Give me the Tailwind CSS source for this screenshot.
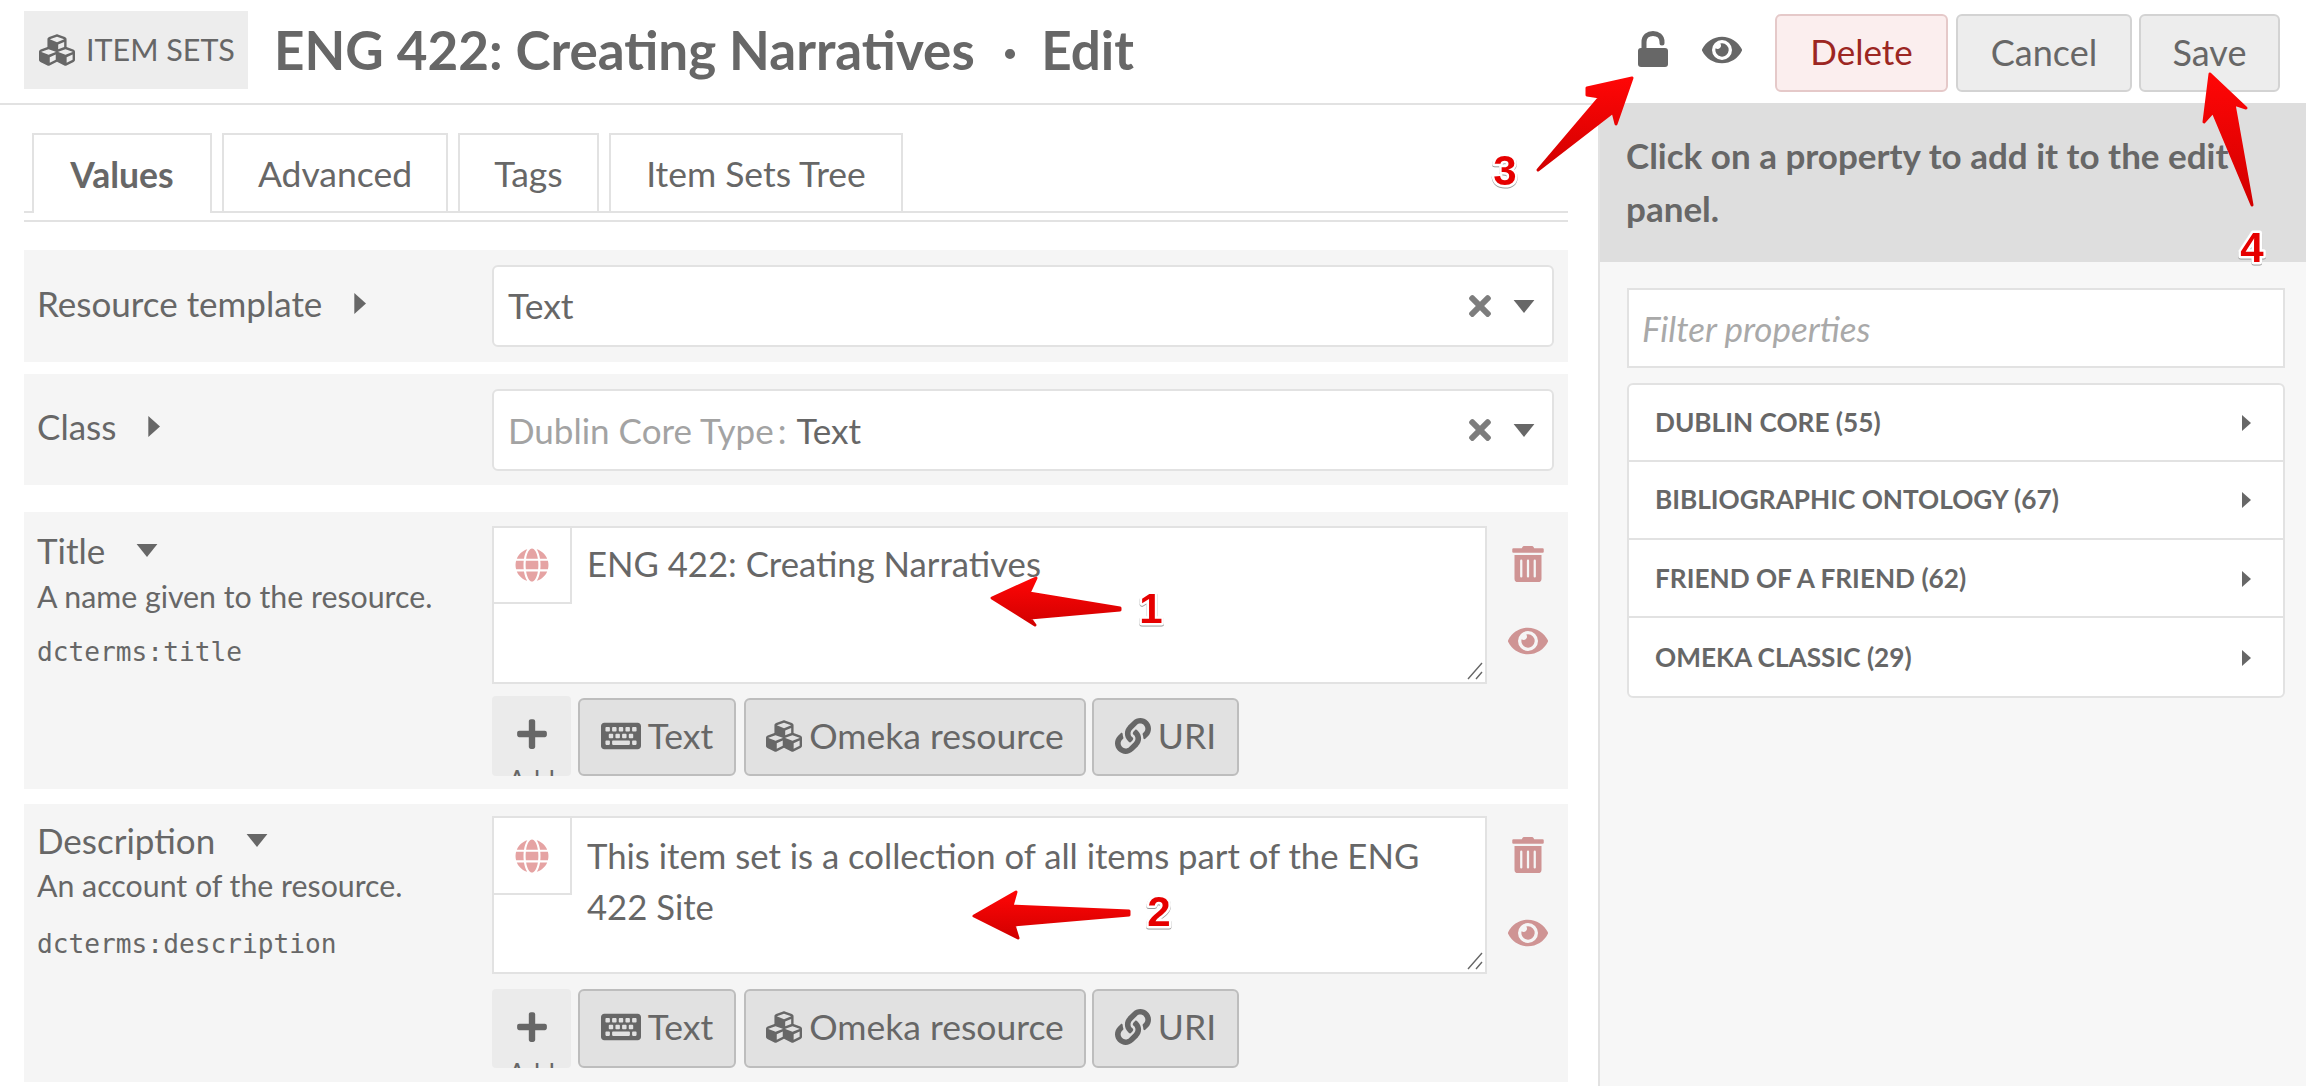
<!DOCTYPE html>
<html lang="en">
<head>
    <meta charset="UTF-8">
    <title>ENG 422: Creating Narratives · Edit</title>
    <script src="https://cdn.jsdelivr.net/npm/@tailwindcss/browser@4"></script>
</head>
<body>
    <!-- icon sprites -->
    <svg class="hidden" xmlns="http://www.w3.org/2000/svg">
        <symbol id="i-cubes" viewBox="0 0 512 512"><path d="M488.6 250.2L392 214V105.5c0-15-9.3-28.4-23.4-33.7l-100-37.5c-8.1-3.1-17.1-3.1-25.3 0l-100 37.5c-14.1 5.3-23.4 18.7-23.4 33.7V214l-96.6 36.2C9.3 255.5 0 268.9 0 283.9V394c0 13.6 7.7 26.1 19.9 32.2l100 50c10.1 5.1 22.1 5.1 32.2 0l103.9-52 103.9 52c10.1 5.1 22.1 5.1 32.2 0l100-50c12.2-6.1 19.9-18.6 19.9-32.2V283.9c0-15-9.3-28.4-23.4-33.7zM358 214.8l-85 31.9v-68.2l85-37v73.3zM154 104.1l102-38.2 102 38.2v.6l-102 41.4-102-41.4v-.6zm84 291.1l-85 42.5v-79.1l85-38.8v75.4zm0-112l-102 41.4-102-41.4v-.6l102-38.2 102 38.2v.6zm240 112l-85 42.5v-79.1l85-38.8v75.4zm0-112l-102 41.4-102-41.4v-.6l102-38.2 102 38.2v.6z"/></symbol>
        <symbol id="i-eye" viewBox="0 0 576 512"><path d="M572.52 241.4C518.29 135.59 410.93 64 288 64S57.68 135.64 3.48 241.41a32.35 32.35 0 0 0 0 29.19C57.71 376.41 165.07 448 288 448s230.32-71.64 284.52-177.41a32.35 32.35 0 0 0 0-29.19zM288 400a144 144 0 1 1 144-144 143.93 143.93 0 0 1-144 144zm0-240a95.31 95.31 0 0 0-25.31 3.79 47.85 47.85 0 0 1-66.9 66.9A95.78 95.78 0 1 0 288 160z"/></symbol>
        <symbol id="i-trash" viewBox="0 0 448 512"><path d="M32 464a48 48 0 0 0 48 48h288a48 48 0 0 0 48-48V128H32zm272-256a16 16 0 0 1 32 0v224a16 16 0 0 1-32 0zm-96 0a16 16 0 0 1 32 0v224a16 16 0 0 1-32 0zm-96 0a16 16 0 0 1 32 0v224a16 16 0 0 1-32 0zM432 32H312l-9.4-18.7A24 24 0 0 0 281.1 0H166.8a23.72 23.72 0 0 0-21.4 13.3L136 32H16A16 16 0 0 0 0 48v32a16 16 0 0 0 16 16h416a16 16 0 0 0 16-16V48a16 16 0 0 0-16-16z"/></symbol>
        <symbol id="i-globe" viewBox="0 0 496 512"><path d="M336.5 160C322 70.7 287.8 8 248 8s-74 62.7-88.5 152h177zM152 256c0 22.2 1.2 43.5 3.3 64h185.3c2.1-20.5 3.3-41.8 3.3-64s-1.2-43.5-3.3-64H155.3c-2.1 20.5-3.3 41.8-3.3 64zm324.7-96c-28.6-67.9-86.5-120.4-158-141.6 24.4 33.8 41.2 84.7 50 141.6h108zM177.2 18.4C105.8 39.6 47.8 92.1 19.3 160h108c8.7-56.9 25.5-107.8 49.9-141.6zM487.4 192H372.7c2.1 21 3.3 42.5 3.3 64s-1.2 43-3.3 64h114.6c5.5-20.5 8.6-41.8 8.6-64s-3.1-43.5-8.5-64zM120 256c0-21.5 1.2-43 3.3-64H8.6C3.2 212.5 0 233.8 0 256s3.2 43.5 8.6 64h114.6c-2-21-3.2-42.5-3.2-64zm39.5 96c14.5 89.3 48.7 152 88.5 152s74-62.7 88.5-152h-177zm159.3 141.6c71.4-21.2 129.4-73.7 158-141.6h-108c-8.8 56.9-25.6 107.8-50 141.6zM19.3 352c28.6 67.9 86.5 120.4 158 141.6-24.4-33.8-41.2-84.7-50-141.6h-108z"/></symbol>
        <symbol id="i-keyboard" viewBox="0 0 576 512"><path d="M528 448H48c-26.51 0-48-21.49-48-48V112c0-26.51 21.49-48 48-48h480c26.51 0 48 21.49 48 48v288c0 26.51-21.49 48-48 48zM128 180v-40c0-6.627-5.373-12-12-12H76c-6.627 0-12 5.373-12 12v40c0 6.627 5.373 12 12 12h40c6.627 0 12-5.373 12-12zm96 0v-40c0-6.627-5.373-12-12-12h-40c-6.627 0-12 5.373-12 12v40c0 6.627 5.373 12 12 12h40c6.627 0 12-5.373 12-12zm96 0v-40c0-6.627-5.373-12-12-12h-40c-6.627 0-12 5.373-12 12v40c0 6.627 5.373 12 12 12h40c6.627 0 12-5.373 12-12zm96 0v-40c0-6.627-5.373-12-12-12h-40c-6.627 0-12 5.373-12 12v40c0 6.627 5.373 12 12 12h40c6.627 0 12-5.373 12-12zm96 0v-40c0-6.627-5.373-12-12-12h-40c-6.627 0-12 5.373-12 12v40c0 6.627 5.373 12 12 12h40c6.627 0 12-5.373 12-12zm-336 96v-40c0-6.627-5.373-12-12-12h-40c-6.627 0-12 5.373-12 12v40c0 6.627 5.373 12 12 12h40c6.627 0 12-5.373 12-12zm96 0v-40c0-6.627-5.373-12-12-12h-40c-6.627 0-12 5.373-12 12v40c0 6.627 5.373 12 12 12h40c6.627 0 12-5.373 12-12zm96 0v-40c0-6.627-5.373-12-12-12h-40c-6.627 0-12 5.373-12 12v40c0 6.627 5.373 12 12 12h40c6.627 0 12-5.373 12-12zm96 0v-40c0-6.627-5.373-12-12-12h-40c-6.627 0-12 5.373-12 12v40c0 6.627 5.373 12 12 12h40c6.627 0 12-5.373 12-12zm-336 96v-40c0-6.627-5.373-12-12-12H76c-6.627 0-12 5.373-12 12v40c0 6.627 5.373 12 12 12h40c6.627 0 12-5.373 12-12zm288 0v-40c0-6.627-5.373-12-12-12H172c-6.627 0-12 5.373-12 12v40c0 6.627 5.373 12 12 12h232c6.627 0 12-5.373 12-12zm96 0v-40c0-6.627-5.373-12-12-12h-40c-6.627 0-12 5.373-12 12v40c0 6.627 5.373 12 12 12h40c6.627 0 12-5.373 12-12z"/></symbol>
        <symbol id="i-link" viewBox="0 0 512 512"><path d="M326.612 185.391c59.747 59.809 58.927 155.698.36 214.59-.11.12-.24.25-.36.37l-67.2 67.2c-59.27 59.27-155.699 59.262-214.96 0-59.27-59.26-59.27-155.7 0-214.96l37.106-37.106c9.84-9.84 26.786-3.3 27.294 10.606.648 17.722 3.826 35.527 9.69 52.721 1.986 5.822.567 12.262-3.783 16.612l-13.087 13.087c-28.026 28.026-28.905 73.66-1.155 101.96 28.024 28.579 74.086 28.749 102.325.51l67.2-67.19c28.191-28.191 28.073-73.757 0-101.83-3.701-3.694-7.429-6.564-10.341-8.569a16.037 16.037 0 0 1-6.947-12.606c-.396-10.567 3.348-21.456 11.698-29.806l21.054-21.055c5.521-5.521 14.182-6.199 20.584-1.731a152.482 152.482 0 0 1 20.522 17.197zM467.547 44.449c-59.261-59.262-155.69-59.27-214.96 0l-67.2 67.2c-.12.12-.25.25-.36.37-58.566 58.892-59.387 154.781.36 214.59a152.454 152.454 0 0 0 20.521 17.196c6.402 4.468 15.064 3.789 20.584-1.731l21.054-21.055c8.35-8.35 12.094-19.239 11.698-29.806a16.037 16.037 0 0 0-6.947-12.606c-2.912-2.005-6.64-4.875-10.341-8.569-28.073-28.073-28.191-73.639 0-101.83l67.2-67.19c28.239-28.239 74.3-28.069 102.325.51 27.75 28.3 26.872 73.934-1.155 101.96l-13.087 13.087c-4.35 4.35-5.769 10.79-3.783 16.612 5.864 17.194 9.042 34.999 9.69 52.721.509 13.906 17.454 20.446 27.294 10.606l37.106-37.106c59.271-59.259 59.271-155.699.001-214.959z"/></symbol>
        <symbol id="i-plus" viewBox="0 0 448 512"><path d="M416 208H272V64c0-17.67-14.33-32-32-32h-32c-17.67 0-32 14.33-32 32v144H32c-17.67 0-32 14.33-32 32v32c0 17.67 14.33 32 32 32h144v144c0 17.67 14.33 32 32 32h32c17.67 0 32-14.33 32-32V304h144c17.67 0 32-14.33 32-32v-32c0-17.67-14.33-32-32-32z"/></symbol>
        <symbol id="i-times" viewBox="0 0 352 512"><path d="M242.72 256l100.07-100.07c12.28-12.28 12.28-32.19 0-44.48l-22.24-22.24c-12.28-12.28-32.19-12.28-44.48 0L176 189.28 75.93 89.21c-12.28-12.28-32.19-12.28-44.48 0L9.21 111.45c-12.28 12.28-12.28 32.19 0 44.48L109.28 256 9.21 356.07c-12.28 12.28-12.28 32.19 0 44.48l22.24 22.24c12.28 12.28 32.2 12.28 44.48 0L176 322.72l100.07 100.07c12.28 12.28 32.2 12.28 44.48 0l22.24-22.24c12.28-12.28 12.28-32.19 0-44.48L242.72 256z"/></symbol>
        <symbol id="i-right" viewBox="0 0 10 16"><polygon points="1,0 10,8 1,16"/></symbol>
        <symbol id="i-down" viewBox="0 0 16 10"><polygon points="0,0 16,0 8,10"/></symbol>
    </svg>

    <div class="relative w-[2306px] h-[1086px] overflow-hidden bg-white text-[#676767] font-['Lato',sans-serif]">
        <!-- top bar -->
        <header class="flex items-center h-[105px] border-b-2 border-[#e2e2e2] pl-[24px] pr-[26px] pb-[3px]">
            <div class="flex items-center gap-[11px] h-[78px] w-[224px] pl-[15px] bg-[#ededed] text-[30.5px] whitespace-nowrap">
                <svg class="w-[36px] h-[36px] fill-current"><use href="#i-cubes"/></svg>
                <span>ITEM SETS</span>
            </div>
            <h1 class="ml-[26px] text-[53px] font-bold whitespace-nowrap">ENG 422: Creating Narratives<span class="ml-[28px] mr-[24px]">·</span>Edit</h1>
            <div class="ml-auto flex items-center">
                <svg class="w-[32px] h-[36px] mr-[33px] mb-[2px]" viewBox="0 0 32 36" fill="none">
                    <path d="M7 18V11C7 5.5 11 2.5 16 2.5S25 5.5 25 11V12" stroke="#676767" stroke-width="5" stroke-linecap="round"/>
                    <rect x="1" y="17" width="30" height="19" rx="3" fill="#676767"/>
                </svg>
                <svg class="w-[40px] h-[36px] mr-[33px] fill-current"><use href="#i-eye"/></svg>
                <div class="flex items-center justify-center w-[173px] h-[78px] mt-[5px] mr-[8px] pb-[2px] rounded-[6px] border-2 border-[#e5c9c9] bg-[#fbeeee] text-[#9c2622] text-[35px]">Delete</div>
                <div class="flex items-center justify-center w-[176px] h-[78px] mt-[5px] mr-[7px] pb-[2px] rounded-[6px] border-2 border-[#d3d3d3] bg-[#ededed] text-[36px]">Cancel</div>
                <div class="flex items-center justify-center w-[141px] h-[78px] mt-[5px] pb-[2px] rounded-[6px] border-2 border-[#d3d3d3] bg-[#ededed] text-[36px]">Save</div>
            </div>
        </header>

        <div class="flex h-[981px]">
            <!-- edit form -->
            <main class="w-[1598px] pl-[24px] pr-[30px] pt-[28px]">
                <nav class="flex gap-[10px] pl-[8px] h-[80px] border-b-2 border-[#e2e2e2] text-[35.5px]">
                    <div class="flex items-center justify-center w-[180px] h-[80px] pt-[2px] border-2 border-b-0 border-[#e2e2e2] bg-white font-bold">Values</div>
                    <div class="flex items-center justify-center w-[226px] h-[78px] pt-[2px] border-2 border-b-0 border-[#e2e2e2]">Advanced</div>
                    <div class="flex items-center justify-center w-[141px] h-[78px] pt-[2px] border-2 border-b-0 border-[#e2e2e2]">Tags</div>
                    <div class="flex items-center justify-center w-[294px] h-[78px] pt-[2px] border-2 border-b-0 border-[#e2e2e2]">Item Sets Tree</div>
                </nav>
                <div class="h-[2px] mt-[7px] bg-[#e2e2e2]"></div>

                <section class="flex mt-[28px] h-[112px] bg-[#f5f5f5]">
                    <div class="flex items-center w-[468px] pl-[13px] pb-[5px] text-[35px]">Resource template
                        <svg class="w-[13px] h-[21px] ml-[31px] fill-current"><use href="#i-right"/></svg>
                    </div>
                    <div class="flex items-center w-[1062px] h-[82px] mt-[15px] pl-[14px] pr-[17px] bg-white border-2 border-[#e2e2e2] rounded-[6px] text-[35.5px]">
                        <span>Text</span>
                        <svg class="ml-auto w-[22px] h-[32px] fill-[#7d7d7d]"><use href="#i-times"/></svg>
                        <svg class="ml-[22px] w-[22px] h-[13px] fill-current"><use href="#i-down"/></svg>
                    </div>
                </section>

                <section class="flex mt-[12px] h-[111px] bg-[#f5f5f5]">
                    <div class="flex items-center w-[468px] pl-[13px] pb-[7px] text-[35px]">Class
                        <svg class="w-[13px] h-[21px] ml-[31px] fill-current"><use href="#i-right"/></svg>
                    </div>
                    <div class="flex items-center w-[1062px] h-[82px] mt-[15px] pl-[14px] pr-[17px] bg-white border-2 border-[#e2e2e2] rounded-[6px] text-[35px]">
                        <span class="text-[#a3a3a3]">Dublin Core Type<span class="ml-[4px]">:</span></span><span class="ml-[10px]">Text</span>
                        <svg class="ml-auto w-[22px] h-[32px] fill-[#7d7d7d]"><use href="#i-times"/></svg>
                        <svg class="ml-[22px] w-[22px] h-[13px] fill-current"><use href="#i-down"/></svg>
                    </div>
                </section>

                <section class="flex mt-[27px] h-[277px] bg-[#f5f5f5] pt-[14px]">
                    <div class="w-[468px] pl-[13px]">
                        <div class="flex items-center h-[50px] -mt-[1px] text-[35px]">Title
                            <svg class="w-[22px] h-[13px] ml-[31px] fill-current"><use href="#i-down"/></svg>
                        </div>
                        <div class="mt-[1px] text-[30.3px] leading-[40px] whitespace-nowrap">A name given to the resource.</div>
                        <div class="mt-[17px] text-[26.2px] leading-[38px] font-['DejaVu_Sans_Mono',monospace]">dcterms:title</div>
                    </div>
                    <div class="w-[995px]">
                        <div class="relative h-[158px] bg-white border-2 border-[#e2e2e2] pl-[93px] pt-[10px] text-[34.7px] leading-[51px]">
                            <div class="absolute -left-[2px] -top-[2px] flex items-center justify-center w-[80px] h-[78px] border-2 border-[#e2e2e2] bg-white">
                                <svg class="w-[34px] h-[34px] fill-[#e5a3a3]"><use href="#i-globe"/></svg>
                            </div>
                            ENG 422: Creating Narratives
                            <svg class="absolute right-[2px] bottom-[2px] w-[16px] h-[18px]" viewBox="0 0 16 18" stroke="#666" stroke-width="1.4" fill="none"><path d="M1 17L15 1M9 17L15 10"/></svg>
                        </div>
                        <div class="flex mt-[12px] h-[80px]">
                            <div class="flex flex-col items-center w-[79px] h-[80px] overflow-hidden bg-[#ebebeb] rounded-[4px] pt-[21px]">
                                <svg class="w-[30px] h-[34px] shrink-0 fill-current"><use href="#i-plus"/></svg>
                                <span class="mt-[14px] text-[26px] leading-[30px]">Add</span>
                            </div>
                            <div class="flex items-center gap-[7px] justify-center w-[158px] h-[78px] mt-[2px] ml-[7px] pb-[3px] rounded-[6px] border-2 border-[#bdbdbd] bg-[#e1e1e1] text-[35.5px]">
                                <svg class="w-[40px] h-[36px] fill-current"><use href="#i-keyboard"/></svg>Text
                            </div>
                            <div class="flex items-center gap-[7px] justify-center w-[342px] h-[78px] mt-[2px] ml-[8px] pb-[3px] rounded-[6px] border-2 border-[#bdbdbd] bg-[#e1e1e1] text-[35.5px]">
                                <svg class="w-[36px] h-[36px] fill-current"><use href="#i-cubes"/></svg>Omeka resource
                            </div>
                            <div class="flex items-center gap-[7px] justify-center w-[147px] h-[78px] mt-[2px] ml-[6px] pb-[3px] rounded-[6px] border-2 border-[#bdbdbd] bg-[#e1e1e1] text-[35.5px]">
                                <svg class="w-[36px] h-[36px] fill-current"><use href="#i-link"/></svg>URI
                            </div>
                        </div>
                    </div>
                    <div class="flex flex-col items-center w-[81px]">
                        <svg class="w-[32px] h-[36px] mt-[20px] fill-[#cf9494]"><use href="#i-trash"/></svg>
                        <svg class="w-[40px] h-[36px] mt-[41px] fill-[#cf9494]"><use href="#i-eye"/></svg>
                    </div>
                </section>

                <section class="flex mt-[15px] h-[278px] bg-[#f5f5f5] pt-[12px]">
                    <div class="w-[468px] pl-[13px]">
                        <div class="flex items-center h-[50px] -mt-[1px] text-[35px]">Description
                            <svg class="w-[22px] h-[13px] ml-[31px] fill-current"><use href="#i-down"/></svg>
                        </div>
                        <div class="text-[30.3px] leading-[40px] whitespace-nowrap">An account of the resource.</div>
                        <div class="mt-[20px] text-[26.2px] leading-[38px] font-['DejaVu_Sans_Mono',monospace]">dcterms:description</div>
                    </div>
                    <div class="w-[995px]">
                        <div class="relative h-[158px] bg-white border-2 border-[#e2e2e2] pl-[93px] pr-[40px] pt-[12px] text-[34.7px] leading-[51px]">
                            <div class="absolute -left-[2px] -top-[2px] flex items-center justify-center w-[80px] h-[79px] border-2 border-[#e2e2e2] bg-white">
                                <svg class="w-[34px] h-[34px] fill-[#e5a3a3]"><use href="#i-globe"/></svg>
                            </div>
                            This item set is a collection of all items part of the ENG 422 Site
                            <svg class="absolute right-[2px] bottom-[2px] w-[16px] h-[18px]" viewBox="0 0 16 18" stroke="#666" stroke-width="1.4" fill="none"><path d="M1 17L15 1M9 17L15 10"/></svg>
                        </div>
                        <div class="flex mt-[15px] h-[79px]">
                            <div class="flex flex-col items-center w-[79px] h-[79px] overflow-hidden bg-[#ebebeb] rounded-[4px] pt-[21px]">
                                <svg class="w-[30px] h-[34px] shrink-0 fill-current"><use href="#i-plus"/></svg>
                                <span class="mt-[14px] text-[26px] leading-[30px]">Add</span>
                            </div>
                            <div class="flex items-center gap-[7px] justify-center w-[158px] h-[79px] ml-[7px] pb-[3px] rounded-[6px] border-2 border-[#bdbdbd] bg-[#e1e1e1] text-[35.5px]">
                                <svg class="w-[40px] h-[36px] fill-current"><use href="#i-keyboard"/></svg>Text
                            </div>
                            <div class="flex items-center gap-[7px] justify-center w-[342px] h-[79px] ml-[8px] pb-[3px] rounded-[6px] border-2 border-[#bdbdbd] bg-[#e1e1e1] text-[35.5px]">
                                <svg class="w-[36px] h-[36px] fill-current"><use href="#i-cubes"/></svg>Omeka resource
                            </div>
                            <div class="flex items-center gap-[7px] justify-center w-[147px] h-[79px] ml-[6px] pb-[3px] rounded-[6px] border-2 border-[#bdbdbd] bg-[#e1e1e1] text-[35.5px]">
                                <svg class="w-[36px] h-[36px] fill-current"><use href="#i-link"/></svg>URI
                            </div>
                        </div>
                    </div>
                    <div class="flex flex-col items-center w-[81px]">
                        <svg class="w-[32px] h-[36px] mt-[21px] fill-[#cf9494]"><use href="#i-trash"/></svg>
                        <svg class="w-[40px] h-[36px] mt-[42px] fill-[#cf9494]"><use href="#i-eye"/></svg>
                    </div>
                </section>
            </main>

            <!-- property selector -->
            <aside class="w-[708px] -mt-[2px] bg-[#f7f7f7] border-l-2 border-[#e2e2e2]">
                <div class="h-[159px] bg-[#dedede] pl-[26px] pr-[16px] pt-[26px] text-[35px] leading-[53px] font-bold">Click on a property to add it to the edit panel.</div>
                <div class="flex items-center h-[80px] mt-[26px] ml-[27px] mr-[21px] pl-[13px] bg-white border-2 border-[#e2e2e2] text-[35px] italic text-[#a9a9a9]">Filter properties</div>
                <div class="mt-[15px] ml-[27px] mr-[21px] bg-white border-2 border-[#e2e2e2] rounded-[6px] text-[26.2px] font-bold">
                    <div class="flex items-center justify-between h-[77px] pl-[26px] pr-[32px] border-b-2 border-[#e2e2e2]">DUBLIN CORE (55)<svg class="w-[10px] h-[16px] fill-current"><use href="#i-right"/></svg></div>
                    <div class="flex items-center justify-between h-[78px] pl-[26px] pr-[32px] border-b-2 border-[#e2e2e2]">BIBLIOGRAPHIC ONTOLOGY (67)<svg class="w-[10px] h-[16px] fill-current"><use href="#i-right"/></svg></div>
                    <div class="flex items-center justify-between h-[78px] pt-[2px] pl-[26px] pr-[32px] border-b-2 border-[#e2e2e2]">FRIEND OF A FRIEND (62)<svg class="w-[10px] h-[16px] fill-current"><use href="#i-right"/></svg></div>
                    <div class="flex items-center justify-between h-[78px] pt-[2px] pl-[26px] pr-[32px]">OMEKA CLASSIC (29)<svg class="w-[10px] h-[16px] fill-current"><use href="#i-right"/></svg></div>
                </div>
            </aside>
        </div>

        <!-- annotation arrows drawn over the screenshot -->
        <svg class="absolute left-0 top-0 w-[2306px] h-[1086px] pointer-events-none" viewBox="0 0 2306 1086" xmlns="http://www.w3.org/2000/svg">
            <defs>
                <linearGradient id="red" x1="0" y1="0" x2="0" y2="1"><stop offset="0" stop-color="#ff0606"/><stop offset="1" stop-color="#d20000"/></linearGradient>
            </defs>
            <g fill="url(#red)" stroke="url(#red)" stroke-width="3" stroke-linejoin="round">
                <polygon points="992,598 1036,578 1029,593 1120,608 1120,610 1030,618 1035,625"/>
                <polygon points="974,916 1016,892 1012,906 1129,911 1129,915 1014,925 1018,938"/>
                <polygon points="1632,78 1587,88 1587,95 1600,97 1538,170 1613,112 1616,124"/>
                <polygon points="2210,74 2246,108 2234,104 2252,205 2213,112 2204,122"/>
            </g>
            <g class="drop-shadow-[0_1px_0_#999]" font-family="Liberation Sans, sans-serif" font-weight="700" font-size="42" fill="#e60000" stroke="#fff" stroke-width="5" stroke-linejoin="round" paint-order="stroke" text-anchor="middle">
                <text x="1151" y="623">1</text>
                <text x="1159" y="926">2</text>
                <text x="1505" y="185">3</text>
                <text x="2252" y="262">4</text>
            </g>
        </svg>
    </div>
</body>
</html>
